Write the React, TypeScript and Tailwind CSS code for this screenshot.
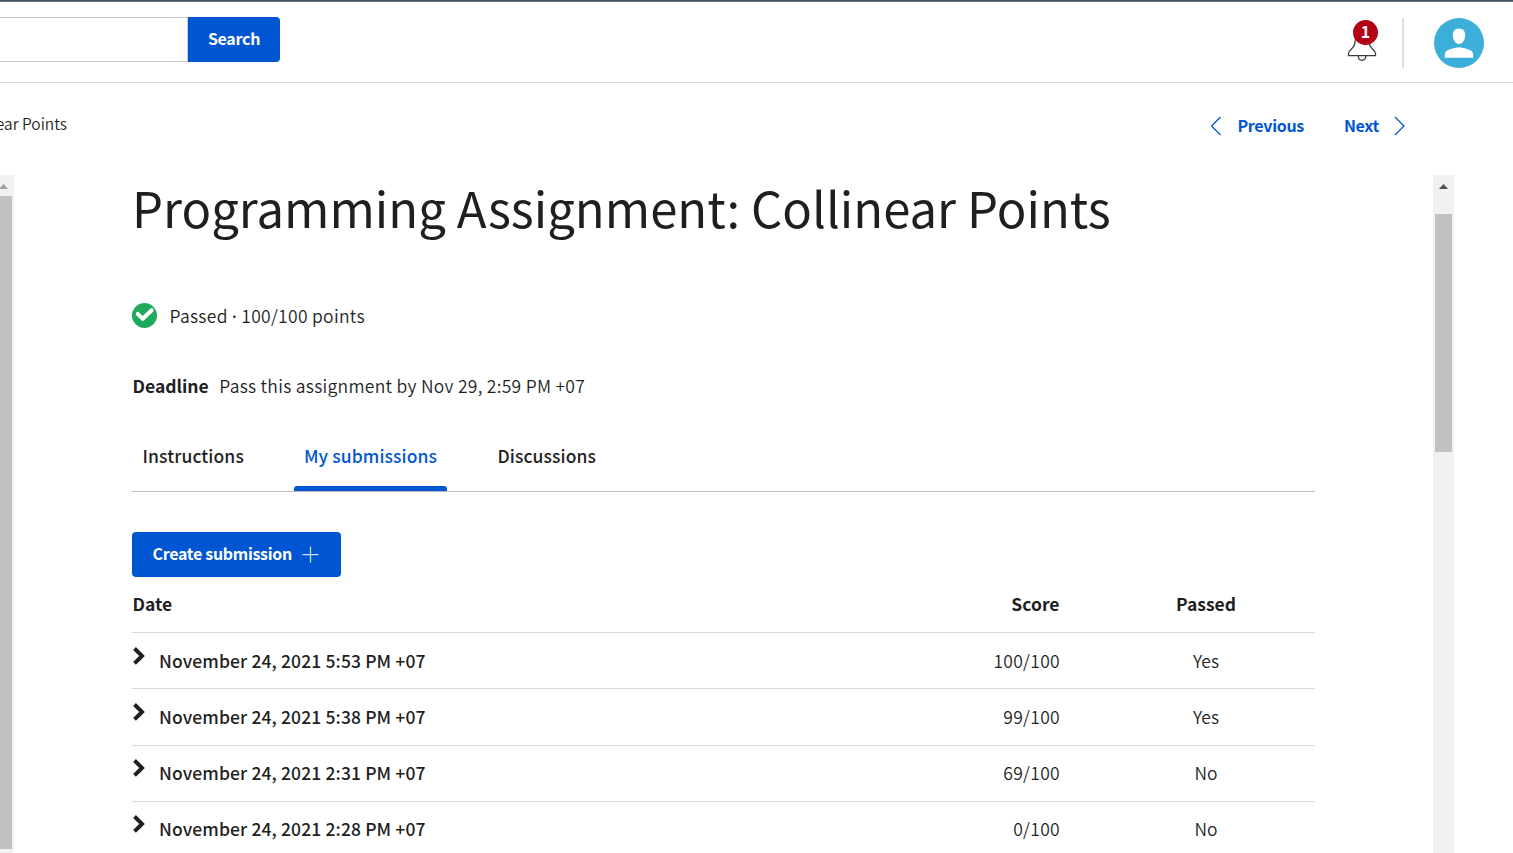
import React from "react";

const submissions = [
  { date: "November 24, 2021 5:53 PM +07", score: "100/100", passed: "Yes", height: "h-[56px]", pad: "pt-[14px]" },
  { date: "November 24, 2021 5:38 PM +07", score: "99/100", passed: "Yes", height: "h-[57px]", pad: "pt-[14px]" },
  { date: "November 24, 2021 2:31 PM +07", score: "69/100", passed: "No", height: "h-[56px]", pad: "pt-[13px]" },
  { date: "November 24, 2021 2:28 PM +07", score: "0/100", passed: "No", height: "h-[56px]", pad: "pt-[13px]" },
];

function Header() {
  return (
    <header className="flex h-[81px] shrink-0 items-start border-b border-[#dcdcdc]">
      <div className="mt-[15px] flex h-[45px]">
        <div className="w-[188px] border-y border-r border-[#c9cbd3] bg-white" />
        <button className="h-[45px] w-[92px] rounded-r-[4px] bg-[#0056d2] pb-[2px] text-[16px] font-bold leading-[41px] tracking-[-0.3px] text-white">
          Search
        </button>
      </div>
      <div className="ml-auto mt-[16px] flex h-[50px] pr-[29px]">
        <div className="relative h-[50px] w-[55px]">
          <svg className="absolute left-0 top-[14px]" width="30" height="32" viewBox="0 0 30 32" fill="none" stroke="#373a3c" strokeWidth="1.25">
            <path d="M1.500 23.500H28.500V21.500C28.100 17 22 17 22 9.500C22 5 19 1.500 15 1.500S8 5 8 9.500C8 17 1.900 17 1.500 21.500Z" />
            <path d="M11.200 23.500C11.200 26.700 12.900 28.300 15 28.300S18.800 26.700 18.800 23.500" />
          </svg>
          <div className="absolute left-[6px] top-[2px] h-[25px] w-[25px] rounded-full bg-[#b30016] text-center text-[16px] font-bold leading-[23px] text-white">
            1
          </div>
        </div>
        <div className="h-[50px] w-[2px] bg-[#dedede]" />
        <svg className="ml-[30px]" width="50" height="50" viewBox="0 0 50 50">
          <circle cx="25" cy="25" r="25" fill="#3bafda" />
          <path d="M25 10.500c4 0 6.200 2.800 6.200 6.500 0 4.700-2.700 9-6.200 9s-6.200-4.300-6.200-9c0-3.700 2.200-6.500 6.200-6.500z" fill="#fff" />
          <path d="M10.700 39.700c0-3.700.3-6.200 2.500-7.200 2.600-1.300 7.300-2.600 11.800-3.200 4.500.6 9.200 1.900 11.800 3.200 2.200 1 2.500 3.500 2.500 7.200z" fill="#fff" />
        </svg>
      </div>
    </header>
  );
}

function Breadcrumbs() {
  return (
    <nav className="flex h-[92px] shrink-0 items-start justify-between pr-[107px]">
      <div className="mt-[28px] flex h-[24px] w-[67px] justify-end whitespace-nowrap text-[15.500px] font-[350] leading-[24px]">
        ear Points
      </div>
      <div className="mt-[31px] flex h-[24px] items-center text-[16px] font-bold leading-[24px] tracking-[-0.3px] text-[#0056d2]">
        <svg width="12" height="20" viewBox="0 0 12 20" fill="none" stroke="#0056d2" strokeWidth="1.250">
          <path d="M10.500 1L1.500 10L10.500 19" />
        </svg>
        <span className="-mt-[2px] ml-[15px]">Previous</span>
        <span className="-mt-[2px] ml-[40px]">Next</span>
        <svg className="ml-[15px]" width="12" height="20" viewBox="0 0 12 20" fill="none" stroke="#0056d2" strokeWidth="1.250">
          <path d="M1 1L10 10L1 19" />
        </svg>
      </div>
    </nav>
  );
}

function Tabs() {
  return (
    <div className="mt-[42px] flex h-[50px] border-b border-[#bdbdbd] text-[17.500px] font-medium leading-[28px] tracking-[0.1px]">
      <div className="w-[162px] pl-[10.500px]">Instructions</div>
      <div className="flex w-[153px] flex-col justify-between text-center text-[#0056d2]">
        <span>My submissions</span>
        <div className="h-[5px] rounded-t-[3px] bg-[#0056d2]" />
      </div>
      <div className="ml-[50.500px]">Discussions</div>
    </div>
  );
}

function Submissions() {
  return (
    <div className="text-[17.500px] leading-[28px]">
      <div className="flex h-[56px] border-b border-[#d9d9d9] pt-[13px] font-bold">
        <div className="w-[727.500px] pl-[0.500px]">Date</div>
        <div className="w-[200px] text-right">Score</div>
        <div className="ml-[96.500px] w-[100px] text-center">Passed</div>
      </div>
      {submissions.map((s) => (
        <div key={s.date} className={`flex border-b border-[#d9d9d9] ${s.pad} ${s.height}`}>
          <svg className="mt-[-1px] shrink-0" width="14" height="20" viewBox="0 0 14 20" fill="none" stroke="#1f1f1f" strokeWidth="4">
            <path d="M2.500 2.500L10 9.900L2.500 17.300" />
          </svg>
          <div className="w-[714px] pl-[13px] font-medium tracking-[0.12px]">{s.date}</div>
          <div className="w-[200px] text-right font-[350] tracking-[0.3px]">{s.score}</div>
          <div className="ml-[96px] w-[100px] text-center font-[350]">{s.passed}</div>
        </div>
      ))}
    </div>
  );
}

export default function App() {
  return (
    <div className="flex h-[853px] w-[1513px] flex-col overflow-hidden bg-white font-['Noto_Sans_CJK_SC',sans-serif] text-[#1f1f1f]">
      <div className="h-[2px] shrink-0 border-b border-[#6a7883] bg-[#42525e]" />
      <Header />
      <Breadcrumbs />
      <div className="flex min-h-0 flex-1">
        <div className="flex w-[14px] flex-col bg-[#f1f1f1]">
          <svg width="14" height="21" viewBox="0 0 14 21">
            <path d="M-1 14L3.500 9L8 14Z" fill="#a3a3a3" />
          </svg>
          <div className="h-[653px] w-[12px] bg-[#c1c1c1]" />
        </div>
        <main className="ml-[118px] w-[1183px]">
          <h1 className="h-[72px] whitespace-nowrap text-[49px] leading-[64px]">
            Programming Assignment: Collinear Points
          </h1>
          <div className="mt-[55px] flex h-[28px] text-[17.500px] font-[350] leading-[28px] tracking-[0.3px]">
            <svg className="mt-[1px]" width="25" height="25" viewBox="0 0 25 25">
              <circle cx="12.500" cy="12.500" r="12.500" fill="#1fa95b" />
              <path d="M5.700 10.800L10.700 15.800L19.700 7.200" fill="none" stroke="#fff" strokeWidth="4" strokeLinejoin="round" strokeLinecap="round" />
            </svg>
            <span className="ml-[12.500px]">
              Passed <span className="font-['Noto_Sans'] font-medium">·</span> 100/100 points
            </span>
          </div>
          <div className="mt-[42px] flex h-[28px] text-[17.500px] leading-[28px]">
            <span className="pl-[0.500px] font-bold">Deadline</span>
            <span className="ml-[10.500px] font-[350] tracking-[0.28px]">Pass this assignment by Nov 29, 2:59 PM +07</span>
          </div>
          <Tabs />
          <button className="mt-[40px] flex h-[45px] w-[209px] items-center rounded-[4px] bg-[#0056d2] pl-[20.500px] text-[16px] font-bold tracking-[-0.3px] text-white">
            <span className="-mt-[4px]">Create submission</span>
            <svg className="ml-[10.500px] -mt-[1px]" width="17" height="17" viewBox="0 0 17 17" stroke="#fff" strokeOpacity=".8" strokeWidth="1.250">
              <path d="M8.500 0.500V16.500M0.500 8.500H16.500" />
            </svg>
          </button>
          <Submissions />
        </main>
        <div className="ml-[118px] flex w-[21px] flex-col bg-[#f1f1f1] pl-[2px]">
          <svg width="17" height="39" viewBox="0 0 17 39">
            <path d="M4 14L8.500 9L13 14Z" fill="#505050" />
          </svg>
          <div className="h-[238px] w-[17px] bg-[#c1c1c1]" />
        </div>
      </div>
    </div>
  );
}
